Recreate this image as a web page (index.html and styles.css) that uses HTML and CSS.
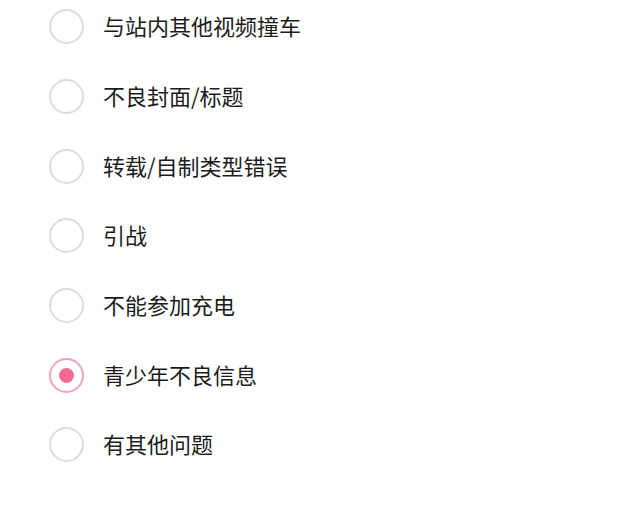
FILE: index.html
```html
<!DOCTYPE html>
<html lang="zh-CN">
<head>
<meta charset="utf-8">
<link rel="stylesheet" href="styles.css">
</head>
<body>
<ul class="options">
  <li class="option"><span class="radio"></span><span class="label">与站内其他视频撞车</span></li>
  <li class="option"><span class="radio"></span><span class="label">不良封面/标题</span></li>
  <li class="option"><span class="radio"></span><span class="label">转载/自制类型错误</span></li>
  <li class="option"><span class="radio"></span><span class="label">引战</span></li>
  <li class="option"><span class="radio"></span><span class="label">不能参加充电</span></li>
  <li class="option"><span class="radio checked"></span><span class="label">青少年不良信息</span></li>
  <li class="option"><span class="radio"></span><span class="label">有其他问题</span></li>
</ul>
</body>
</html>
```
FILE: styles.css
```css
html, body {
  margin: 0;
  padding: 0;
  background: #ffffff;
}
body {
  width: 620px;
  height: 513px;
  overflow: hidden;
  font-family: "Noto Sans CJK SC", "Noto Sans", sans-serif;
}
.options {
  list-style: none;
  margin: -8px 0 0 0;
  padding: 0 0 0 49px;
}
.option {
  height: 69.667px;
  display: flex;
  align-items: center;
  gap: 19px;
}
.radio {
  box-sizing: border-box;
  width: 35px;
  height: 35px;
  border: 2px solid #dcdcdc;
  border-radius: 50%;
  display: flex;
  align-items: center;
  justify-content: center;
  flex: none;
}
.radio.checked {
  border-color: #f3a2bc;
}
.radio.checked::after {
  content: "";
  width: 15px;
  height: 15px;
  border-radius: 50%;
  background: #f36a93;
}
.label {
  font-size: 22px;
  color: #1c1c1c;
  line-height: 1;
  margin-top: -3px;
}
```
